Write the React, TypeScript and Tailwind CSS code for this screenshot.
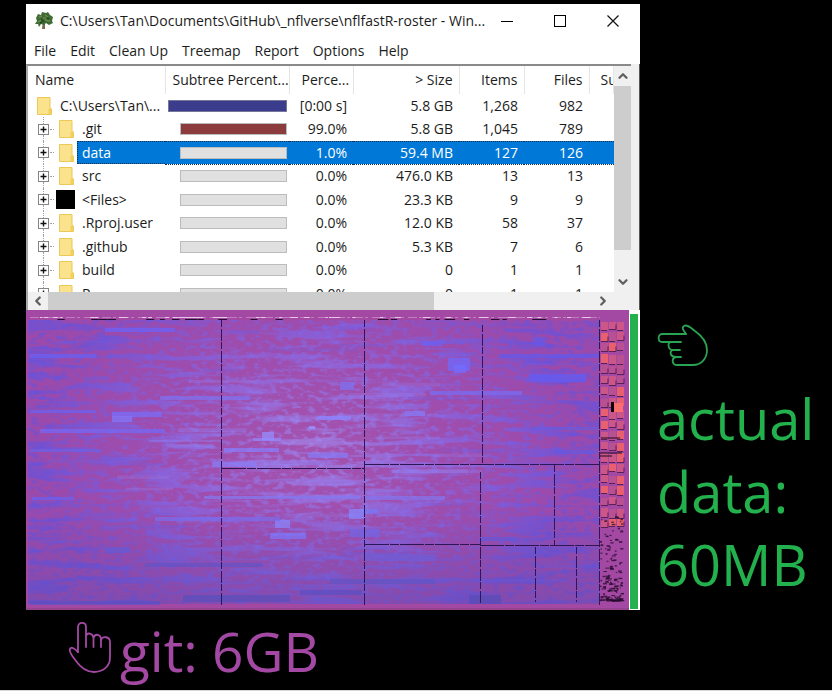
import React from 'react';
import { ChevronDown, ChevronLeft, ChevronRight, ChevronUp } from 'lucide-react';

type Row = {
  name: string;
  kind: 'root' | 'folder' | 'files';
  percent: string;
  size: string;
  items: string;
  files: string;
  bar?: string;
  selected?: boolean;
};

const rows: Row[] = [
  { name: 'C:\\Users\\Tan\\...', kind: 'root', percent: '[0:00 s]', size: '5.8 GB', items: '1,268', files: '982', bar: 'bg-[#3c3c8c]' },
  { name: '.git', kind: 'folder', percent: '99.0%', size: '5.8 GB', items: '1,045', files: '789', bar: 'bg-[#8c3c3c]' },
  { name: 'data', kind: 'folder', percent: '1.0%', size: '59.4 MB', items: '127', files: '126', selected: true },
  { name: 'src', kind: 'folder', percent: '0.0%', size: '476.0 KB', items: '13', files: '13' },
  { name: '<Files>', kind: 'files', percent: '0.0%', size: '23.3 KB', items: '9', files: '9' },
  { name: '.Rproj.user', kind: 'folder', percent: '0.0%', size: '12.0 KB', items: '58', files: '37' },
  { name: '.github', kind: 'folder', percent: '0.0%', size: '5.3 KB', items: '7', files: '6' },
  { name: 'build', kind: 'folder', percent: '0.0%', size: '0', items: '1', files: '1' },
  { name: 'R', kind: 'folder', percent: '0.0%', size: '0', items: '1', files: '1' },
];

const menus = ['File', 'Edit', 'Clean Up', 'Treemap', 'Report', 'Options', 'Help'];

function TreeLogo() {
  return (
    <svg viewBox="0 0 20 20" className="h-5 w-5 shrink-0" aria-hidden="true">
      <path d="M9 10 L8 18 H11 L11 10 Z" fill="#7a6a4a" />
      <path d="M2 7 L4 3 L7 4 L8 1 L12 2 L14 1 L16 4 L19 6 L18 10 L19 12 L15 14 L12 12 L10 14 L7 13 L5 16 L4 13 L1 13 L3 10 Z" fill="#3f6b35" />
      <path d="M5 6 L8 5 M11 4 L14 6 M4 11 L8 9 M11 9 L16 10 M9 7 L12 7" stroke="#6a8a48" strokeWidth="1.4" />
      <path d="M7 8 L10 11 M13 7 L15 8 M6 12 L8 11" stroke="#1f4420" strokeWidth="1.4" />
    </svg>
  );
}

function FolderIcon() {
  return (
    <svg viewBox="0 0 16 20" className="h-5 w-4 shrink-0" aria-hidden="true">
      <path d="M1.5 1.5 H14 V12 L15.5 13 V18.5 H1.5 Z" fill="#fbe28c" stroke="#ecc957" />
      <path d="M12.5 18 V13.5 L14 12 L15.5 13 V18.5 Z" fill="#f2d05c" />
    </svg>
  );
}

function NameCell({ row }: { row: Row }) {
  if (row.kind === 'root') {
    return (
      <div className="flex h-full items-center gap-2 pl-2">
        <FolderIcon />
        <span>{row.name}</span>
      </div>
    );
  }
  return (
    <div className="flex h-full items-center">
      <div className="flex h-full w-[22px] flex-col items-center pl-2">
        <span className="w-0 flex-1 border-l border-dotted border-[#a0a0a0]" />
        <button aria-label={`Expand ${row.name}`} className="block shrink-0">
          <svg viewBox="0 0 11 11" className="block h-[11px] w-[11px]" aria-hidden="true">
            <rect x=".5" y=".5" width="10" height="10" fill="#fff" stroke="#858585" />
            <path d="M2.500 5.500 H8.500 M5.500 2.500 V8.500" stroke="#111" strokeWidth="1.4" />
          </svg>
        </button>
        <span className="w-0 flex-1 border-l border-dotted border-[#a0a0a0]" />
      </div>
      <span className="w-1 border-t border-dotted border-[#a0a0a0]" />
      <span className="flex w-[23px] shrink-0 pl-[2px]">
        {row.kind === 'files' ? <span className="block h-[19px] w-[19px] bg-black" /> : <span className="pl-[2px]"><FolderIcon /></span>}
      </span>
      <span
        className={
          row.selected
            ? 'flex h-full flex-1 items-center border-y border-l border-dotted border-[#12304c] bg-[#0078d7] pl-1'
            : 'flex h-full flex-1 items-center pl-[5px]'
        }
      >
        {row.name}
      </span>
    </div>
  );
}

function FileList() {
  const num = 'p-0 text-right';
  return (
    <div className="h-[226px] min-w-0 flex-1 overflow-hidden bg-white">
      <table className="w-full table-fixed border-collapse text-[14px] leading-[18px] text-[#1c1c1c]">
        <colgroup>
          <col className="w-[137px]" />
          <col className="w-[124px]" />
          <col className="w-[64px]" />
          <col className="w-[106px]" />
          <col className="w-[65px]" />
          <col className="w-[65px]" />
          <col />
        </colgroup>
        <thead>
          <tr className="h-[28px] whitespace-nowrap [&>th]:border-r [&>th]:border-[#e5e5e5] [&>th]:p-0 [&>th]:font-normal">
            <th className="text-left"><span className="pl-[7px]">Name</span></th>
            <th className="text-left"><span className="pl-[7px]">Subtree Percent...</span></th>
            <th className="text-left"><span className="pl-[12px]">Perce...</span></th>
            <th className="text-right"><span className="pr-[6px]">&gt; Size</span></th>
            <th className="text-right"><span className="pr-[6px]">Items</span></th>
            <th className="text-right"><span className="pr-[6px]">Files</span></th>
            <th className="overflow-hidden text-left"><span className="pl-[11px]">Su</span></th>
          </tr>
        </thead>
        <tbody>
          {rows.map((row) => (
            <tr
              key={row.name}
              className={
                row.selected
                  ? 'h-[23px] whitespace-nowrap text-white [&>td+td]:border-y [&>td+td]:border-dotted [&>td+td]:border-[#12304c] [&>td+td]:bg-[#0078d7]'
                  : 'whitespace-nowrap odd:h-[23px] even:h-6'
              }
            >
              <td className="h-[inherit] p-0"><NameCell row={row} /></td>
              <td className="p-0">
                <div
                  className={
                    row.kind === 'root'
                      ? `ml-[3px] mr-[2px] h-3 border border-[#77779c] ${row.bar}`
                      : `ml-[15px] mr-[2px] h-3 border border-[#bcbcbc] ${row.bar ?? 'bg-[#e0e0e0]'}`
                  }
                />
              </td>
              <td className={num}><span className="pr-[6px]">{row.percent}</span></td>
              <td className={num}><span className="pr-[6px]">{row.size}</span></td>
              <td className={num}><span className="pr-[6px]">{row.items}</span></td>
              <td className={num}><span className="pr-[6px]">{row.files}</span></td>
              <td className="p-0" />
            </tr>
          ))}
        </tbody>
      </table>
    </div>
  );
}

function random(seed: number) {
  let s = seed;
  return () => {
    s = (s * 16807) % 2147483647;
    return s / 2147483647;
  };
}

const next = random(77);

const streaks = Array.from({ length: 90 }, () => {
  const x = 28 + next() * 540;
  const y = 322 + next() * 278;
  const w = Math.min(20 + next() * 80, 600 - x);
  const near = Math.max(0, 1 - Math.hypot((x + w / 2 - 300) / 260, (y - 450) / 140));
  return { x, y, w, h: 2 + next() * 2, near, o: 0.2 + next() * 0.35 };
});

const patches = [
  [105, 328, 70, 4, '#6c62fa'], [30, 354, 66, 4, '#6860f4'], [112, 412, 50, 5, '#7a6cf8'], [112, 416, 20, 6, '#8276fa'],
  [40, 429, 125, 4, '#7468f6'], [30, 410, 66, 3, '#6c62f0'], [32, 497, 42, 3, '#6a60f0'], [30, 449, 70, 3, '#6c60e4'],
  [262, 432, 12, 8, '#958cff'], [253, 438, 28, 3, '#9488fc'], [224, 448, 55, 4, '#887cfa'], [318, 416, 33, 4, '#8c84ff'],
  [309, 426, 6, 3, '#9890ff'], [308, 453, 40, 5, '#867af4'], [212, 462, 44, 5, '#8a7cf6'], [275, 520, 15, 8, '#8c88ff'],
  [270, 533, 36, 6, '#827aff'], [349, 509, 16, 10, '#8688ff'], [365, 509, 13, 5, '#7a78f8'], [448, 358, 22, 13, '#7068fa'],
  [454, 365, 12, 8, '#746cff'], [529, 374, 57, 8, '#625cf4'], [500, 354, 100, 4, '#6458ea'], [533, 337, 12, 9, '#6458ea'],
  [422, 341, 20, 5, '#6c60f0'], [430, 391, 92, 4, '#786cf2'], [340, 382, 14, 8, '#7c72f2'], [405, 411, 20, 5, '#847af6'],
  [365, 496, 80, 4, '#8474ee'], [204, 496, 156, 3, '#8478f0'], [155, 517, 125, 4, '#7c6eee'], [350, 529, 30, 8, '#7468ec'],
  [365, 554, 70, 7, '#7462e0'], [105, 547, 25, 6, '#685cdc'], [145, 563, 118, 4, '#6656cc'], [183, 595, 107, 7, '#5c50c0'],
  [300, 590, 62, 5, '#5c52cc'], [469, 595, 32, 9, '#564ebb'], [330, 579, 105, 5, '#6458cf'], [160, 396, 90, 4, '#8070ee'],
  [30, 601, 130, 4, '#6252c8'], [480, 537, 38, 4, '#6858dc'], [555, 450, 42, 4, '#6458e2'], [530, 427, 68, 3, '#6b5bdc'],
] as const;

const cellLines = [
  'M221.5 320V606', 'M364.5 320V606', 'M482.5 325V463', 'M480.5 472V604', 'M554.5 465V545', 'M535.5 547V602',
  'M576.5 547V602', 'M599.5 320V606', 'M222 468.5H365', 'M365 464.5H600', 'M365 544.5H480', 'M480 545.5H600',
];

const tiles: { x: number; y: number; w: number; h: number; fill: string; side: boolean }[] = [];
for (let y = 321; y < 528; y += 11) {
  for (let c = 0; c < 3; c++) {
    const v = next();
    tiles.push({
      x: 601 + c * 8,
      y: y + Math.floor(next() * 2),
      w: 7,
      h: 7 + Math.floor(next() * 3),
      fill: v > 0.8 ? '#e86070' : v > 0.35 ? '#cc5688' : '#b85092',
      side: next() > 0.5,
    });
  }
}

const crumbs = Array.from({ length: 150 }, () => {
  const t = next();
  return { x: 600 + next() * 22, y: 516 + (1 - t * t) * 84, w: 1 + next() * 3, h: 1 + next() };
});

const ticks = Array.from({ length: 80 }, () => ({ x: 32 + next() * 562, w: 2 + next() * 7, light: next() > 0.5 }));

function Treemap() {
  return (
    <svg
      viewBox="26 310 603 300"
      preserveAspectRatio="none"
      className="block h-[300px] min-w-0 flex-1"
      role="img"
      aria-label="Treemap of disk usage"
    >
      <defs>
        <radialGradient id="glow" gradientUnits="userSpaceOnUse" cx="310" cy="450" r="270" gradientTransform="translate(0 130) scale(1 .71)">
          <stop offset="0" stopColor="#a496fa" />
          <stop offset=".5" stopColor="#8470f2" />
          <stop offset="1" stopColor="#5f54e4" />
        </radialGradient>
        <filter id="bands" x="0" y="0" width="100%" height="100%" colorInterpolationFilters="sRGB">
          <feTurbulence type="fractalNoise" baseFrequency=".014 .13" numOctaves="3" seed="8" />
          <feColorMatrix values="0 0 0 0 0  0 0 0 0 0  0 0 0 0 0  6 0 0 0 -3" result="n" />
          <feComposite in="SourceGraphic" in2="n" operator="in" />
        </filter>
        <filter id="grain" x="0" y="0" width="100%" height="100%" colorInterpolationFilters="sRGB">
          <feTurbulence type="fractalNoise" baseFrequency=".13 .22" numOctaves="2" seed="21" />
          <feColorMatrix values="0 0 0 0 0  0 0 0 0 0  0 0 0 0 0  5 0 0 0 -2.5" result="n" />
          <feComposite in="SourceGraphic" in2="n" operator="in" />
        </filter>
        <linearGradient id="dusk" x1="0" y1="0" x2="0" y2="1">
          <stop offset=".65" stopColor="#5a4ab0" stopOpacity="0" />
          <stop offset="1" stopColor="#5a4ab0" stopOpacity=".35" />
        </linearGradient>
      </defs>
      <rect x="26" y="310" width="603" height="300" fill="#a349a4" />
      <rect x="28" y="320" width="572" height="284" fill="url(#glow)" opacity=".12" />
      <rect x="28" y="320" width="572" height="284" fill="url(#glow)" filter="url(#bands)" opacity=".55" />
      <rect x="28" y="320" width="572" height="284" fill="url(#glow)" filter="url(#grain)" opacity=".5" />
      {streaks.map((s, i) => (
        <rect key={i} x={s.x} y={s.y} width={s.w} height={s.h} opacity={s.o * 0.7} fill={s.near > 0.35 ? '#9384f6' : '#6c5ee6'} />
      ))}
      {patches.map(([x, y, w, h, fill], i) => (
        <rect key={i} x={x} y={y} width={w} height={h} fill={fill} opacity=".75" />
      ))}
      <rect x="28" y="320" width="572" height="284" fill="url(#dusk)" />
      {cellLines.map((d, i) => (
        <path key={d} d={d} stroke="#2c1656" strokeWidth="1" strokeDasharray={i > 7 ? '24 1 9 1' : '7 2 12 1'} />
      ))}
      <path d="M30 317.5H600" stroke="#c58bc6" strokeWidth="1" strokeDasharray="9 2 3 4" opacity=".8" />
      {ticks.map((t, i) => (
        <rect key={i} x={t.x} y={t.light ? 317 : 319} width={t.w} height="1" fill={t.light ? '#e6c9e6' : '#24102e'} />
      ))}
      {tiles.map((t, i) => (
        <g key={i}>
          <rect x={t.x} y={t.y} width={t.w} height={t.h} fill={t.fill} />
          <path d={t.side ? `M${t.x} ${t.y + t.h}.5h7v-5` : `M${t.x} ${t.y + t.h}.5h6`} fill="none" stroke="#5a2058" />
        </g>
      ))}
      <rect x="611" y="402" width="3" height="10" fill="#080208" />
      <rect x="614" y="403" width="9" height="9" fill="#fa6e70" />
      <path d="M600 453H622M601 438H620M600 456H612" stroke="#1a0a1a" />
      {crumbs.map((c, i) => (
        <rect key={i} x={c.x} y={c.y} width={c.w} height={c.h} fill="#260c2c" opacity=".75" />
      ))}
      <path d="M26 608H629V610H26Z" fill="#94438f" />
    </svg>
  );
}

function PointLeft() {
  return (
    <svg viewBox="0 0 52 44" className="block h-11 w-[52px]" fill="none" stroke="#2aa352" strokeWidth="1.8" strokeLinecap="round" strokeLinejoin="round" aria-hidden="true">
      <path d="M29 10 H5 C.5 10 .5 18 5 18 H24" />
      <path d="M29 10 C27 7 24 4 27 2 C30 0 34 4 38 7 C45 12 50 19 50 26 C50 35 44 41 36 41 H20 C15 41 14 34 19 33 H24" />
      <path d="M14 18 C10 19 11 26 16 26 H23 M16 26 C12 27 13 33 19 33" />
    </svg>
  );
}

function PointUp() {
  return (
    <svg viewBox="0 0 44 54" className="block h-[54px] w-11 shrink-0" fill="none" stroke="#a349a4" strokeWidth="1.8" strokeLinecap="round" strokeLinejoin="round" aria-hidden="true">
      <path d="M10 31 V6 C10 .5 18 .5 18 6 V26" />
      <path d="M10 31 C7 28 3 25 2 28 C.5 31 5 36 8 40 C13 47 19 51 26 51 C34 51 42 46 42 37 V21 C42 15 34 15 33 19 V26" />
      <path d="M18 15 C19 11 25 12 25.500 17 V26 M25.500 17 C27 12 33 13 33 19" />
    </svg>
  );
}

export default function App() {
  return (
    <div className="flex min-h-screen flex-col border-b border-[#d8d8dc] bg-black font-['Open_Sans','Noto_Sans',sans-serif]">
      <div className="flex flex-1 pt-1">
        <main className="min-w-0 flex-1 pl-[26px]">
          <section className="bg-white">
            <header className="flex h-[34px] items-center pl-2 text-black">
              <TreeLogo />
              <h1 className="min-w-0 flex-1 whitespace-nowrap pl-[6px] text-[14px] leading-5 text-[#1c1c1c]">
                C:\Users\Tan\Documents\GitHub\_nflverse\nflfastR-roster - Win...
              </h1>
              <div className="flex shrink-0">
                <button aria-label="Minimize" className="flex h-8 w-[53px] items-center justify-center">
                  <span className="h-px w-3 bg-black" />
                </button>
                <button aria-label="Maximize" className="flex h-8 w-[53px] items-center justify-center">
                  <span className="h-3 w-3 border border-black" />
                </button>
                <button aria-label="Close" className="flex h-8 w-[54px] items-center justify-center">
                  <svg viewBox="0 0 12 12" className="h-3 w-3" stroke="#111" strokeWidth="1.2" aria-hidden="true">
                    <path d="M.5 .5 L11.500 11.500 M11.500 .5 L.5 11.500" />
                  </svg>
                </button>
              </div>
            </header>
            <nav className="flex h-[26px] items-center gap-[14px] whitespace-nowrap pl-2 text-[14px] leading-5 text-[#1c1c1c]">
              {menus.map((m) => (
                <button key={m}>{m}</button>
              ))}
            </nav>
            <div className="flex bg-[#f0f0f0]">
              <div className="min-w-0 flex-1 border-l-2 border-t-2 border-[#8a8a8a] border-l-[#a8a8a8]">
                <div className="flex">
                  <FileList />
                  <div className="flex w-[17px] flex-col bg-[#f0f0f0]">
                    <button aria-label="Scroll up" className="flex h-5 items-center justify-center">
                      <ChevronUp size={14} strokeWidth={4} color="#606060" />
                    </button>
                    <div className="h-[164px] bg-[#cdcdcd]" />
                    <div className="flex-1" />
                    <button aria-label="Scroll down" className="flex h-5 items-center justify-center">
                      <ChevronDown size={14} strokeWidth={4} color="#606060" />
                    </button>
                  </div>
                </div>
                <div className="flex h-[18px] bg-[#f0f0f0]">
                  <button aria-label="Scroll left" className="flex w-5 items-center justify-center">
                    <ChevronLeft size={14} strokeWidth={4} color="#606060" />
                  </button>
                  <div className="w-[386px] bg-[#cdcdcd]" />
                  <div className="flex-1" />
                  <button aria-label="Scroll right" className="flex w-5 items-center justify-center">
                    <ChevronRight size={14} strokeWidth={4} color="#606060" />
                  </button>
                  <div className="w-[18px]" />
                </div>
              </div>
              <div className="w-[9px] border-r border-[#555]" />
            </div>
            <div className="flex">
              <Treemap />
              <div className="w-[11px] bg-white pb-px pl-px pr-[2px] pt-1">
                <div className="h-full bg-[#22b14c]" />
              </div>
            </div>
          </section>
          <div className="flex pl-[42px] pt-[11px] text-[#a349a4]">
            <PointUp />
            <p className="whitespace-nowrap pl-2 text-[55px] leading-[60px]">git: 6GB</p>
          </div>
        </main>
        <aside className="w-[192px] shrink-0 pl-[17px] pt-[320px] text-[#22b14c]">
          <PointLeft />
          <p className="pt-[14px] text-[56px] leading-[73px]">
            actual
            <br />
            data:
            <br />
            60MB
          </p>
        </aside>
      </div>
    </div>
  );
}
